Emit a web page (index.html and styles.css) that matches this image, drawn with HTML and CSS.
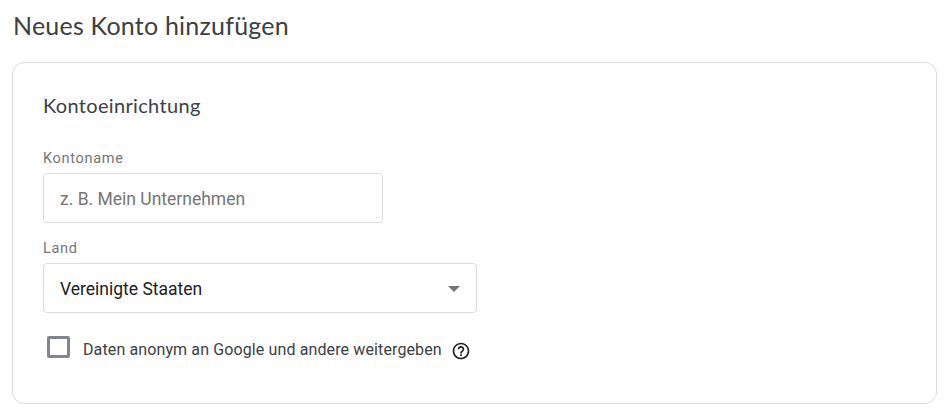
FILE: index.html
```html
<!DOCTYPE html>
<html lang="de">
<head>
    <meta charset="UTF-8">
    <meta name="viewport" content="width=device-width, initial-scale=1.0">
    <title>Neues Konto hinzufügen</title>
    <link rel="stylesheet" href="styles.css">
</head>
<body>
    <h1>Neues Konto hinzufügen</h1>

    <form class="card">
        <h2>Kontoeinrichtung</h2>

        <div class="form-group">
            <label for="name">Kontoname</label>
            <input type="text" id="name" name="name" placeholder="z. B. Mein Unternehmen">
        </div>

        <div class="form-group">
            <label for="country">Land</label>
            <div class="select" id="country">
                <span>Vereinigte Staaten</span>
                <svg width="12" height="6" viewBox="0 0 12 6"><path d="M0 0h12L6 6z" fill="#757575"/></svg>
            </div>
        </div>

        <div class="share">
            <span class="checkbox"></span>
            <span class="share-text">Daten anonym an Google und andere weitergeben</span>
            <svg class="help" width="20" height="20" viewBox="0 0 24 24"><path fill="#202124" d="M11 18h2v-2h-2v2zm1-16C6.48 2 2 6.48 2 12s4.48 10 10 10 10-4.48 10-10S17.52 2 12 2zm0 18c-4.41 0-8-3.59-8-8s3.59-8 8-8 8 3.59 8 8-3.59 8-8 8zm0-14c-2.21 0-4 1.79-4 4h2c0-1.1.9-2 2-2s2 .9 2 2c0 2-3 1.75-3 5h2c0-2.25 3-2.5 3-5 0-2.21-1.79-4-4-4z"/></svg>
        </div>
    </form>
</body>
</html>
```

FILE: styles.css
```css
* { box-sizing: border-box; }
body { margin: 0; padding: 9px 12px 0; background: #fff; color: #3c4043; font-family: Roboto, "Liberation Sans", sans-serif; }
h1 { margin: 0 0 21px 1px; font: 400 25px/32px Lato, sans-serif; letter-spacing: .22px; }
h2 { margin: 0 0 32px; font: 400 20px/26px Lato, sans-serif; letter-spacing: .33px; }
.card { width: 925px; height: 342px; padding: 29px 30px; border: 1px solid #dadce0; border-radius: 12px; }
.form-group { margin-bottom: 17px; }
label { display: block; height: 18px; margin-bottom: 5px; color: #757575; font-size: 14.5px; line-height: 18px; letter-spacing: .7px; }
input, .select { height: 50px; padding: 1px 16px 0; border: 1px solid #dadce0; border-radius: 4px; font: 400 17.5px/48px Roboto, sans-serif; }
input { display: block; width: 340px; }
input::placeholder { color: #757575; }
.select { display: flex; align-items: center; justify-content: space-between; width: 434px; color: #202124; }
.share { display: flex; align-items: flex-start; margin: 23px 0 0 4px; }
.checkbox { width: 23px; height: 22px; border: 3px solid #80868b; border-radius: 2px; }
.share-text { margin: 2px 0 0 13px; font-size: 16px; line-height: 24px; letter-spacing: .12px; }
.help { margin: 5px 0 0 9px; }
```
